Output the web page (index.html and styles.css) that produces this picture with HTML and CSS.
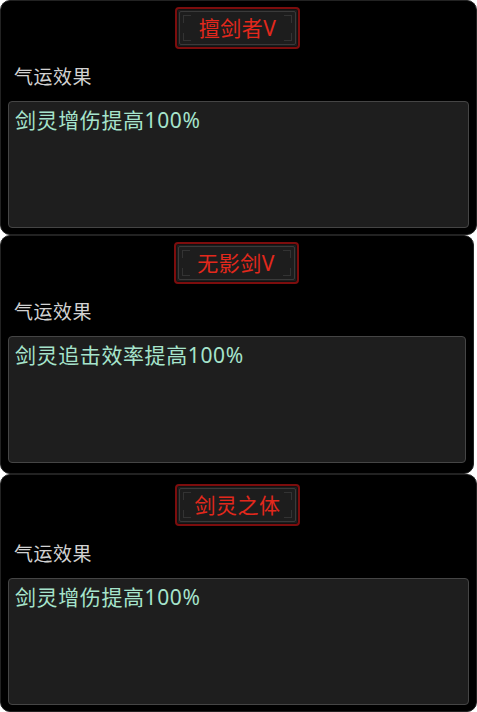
FILE: index.html
```html
<!DOCTYPE html>
<html>

<head>
    <title>气运效果</title>
    <meta charset="UTF-8">
    <link rel="stylesheet" href="styles.css">
</head>

<body>
    <div class="panel">
        <div class="badge"><span>擅剑者V</span></div>
        <p class="label">气运效果</p>
        <div class="box">剑灵增伤提高100%</div>
    </div>
    <div class="panel panel-narrow">
        <div class="badge"><span>无影剑V</span></div>
        <p class="label">气运效果</p>
        <div class="box">剑灵追击效率提高100%</div>
    </div>
    <div class="panel panel-last">
        <div class="badge"><span>剑灵之体</span></div>
        <p class="label">气运效果</p>
        <div class="box">剑灵增伤提高100%</div>
    </div>
</body>

</html>
```

FILE: styles.css
```css
* {
    margin: 0;
    padding: 0;
    box-sizing: border-box;
}

body {
    background: #ffffff;
    font-family: "Noto Sans", "Noto Sans CJK SC", sans-serif;
}

.panel {
    background: #000000;
    border: 1px solid #222222;
    border-radius: 10px;
    height: 235px;
    padding: 6px 7px 0;
    display: flex;
    flex-direction: column;
}

.panel-narrow {
    width: 474px;
    height: 239px;
}

.panel-last {
    height: 238px;
    padding-top: 9px;
}

.badge {
    align-self: center;
    position: relative;
    width: 125px;
    height: 42px;
    margin-left: -2px;
    border: 2px solid #7c0d0d;
    border-radius: 4px;
    background: #1d1d1d;
    box-shadow: inset 0 0 0 1px #111111;
    display: flex;
    align-items: center;
    justify-content: center;
}

.badge::before {
    content: "";
    position: absolute;
    left: 2px;
    right: 2px;
    top: 2px;
    bottom: 2px;
    border: 1px solid #3a3a3a;
    border-radius: 2px;
}

/* corner brackets */
.badge::after {
    content: "";
    position: absolute;
    left: 6px;
    right: 6px;
    top: 6px;
    bottom: 6px;
    background:
        linear-gradient(#333, #333) left top / 8px 1px no-repeat,
        linear-gradient(#333, #333) left top / 1px 8px no-repeat,
        linear-gradient(#333, #333) right top / 8px 1px no-repeat,
        linear-gradient(#333, #333) right top / 1px 8px no-repeat,
        linear-gradient(#333, #333) left bottom / 8px 1px no-repeat,
        linear-gradient(#333, #333) left bottom / 1px 8px no-repeat,
        linear-gradient(#333, #333) right bottom / 8px 1px no-repeat,
        linear-gradient(#333, #333) right bottom / 1px 8px no-repeat;
}

.badge span {
    position: relative;
    z-index: 1;
    color: #e3281c;
    font-size: 21px;
    line-height: 24px;
    letter-spacing: 0.5px;
}

.label {
    margin-top: 16px;
    margin-left: 6px;
    color: #d2d2d2;
    font-size: 19px;
    line-height: 24px;
    letter-spacing: 0.5px;
}

.box {
    margin-top: 12px;
    height: 127px;
    background: #1e1e1e;
    border: 1px solid #454545;
    border-radius: 4px;
    padding: 5px 6px;
    color: #a6e4cc;
    font-size: 21px;
    line-height: 26px;
    letter-spacing: 0.6px;
}
```
